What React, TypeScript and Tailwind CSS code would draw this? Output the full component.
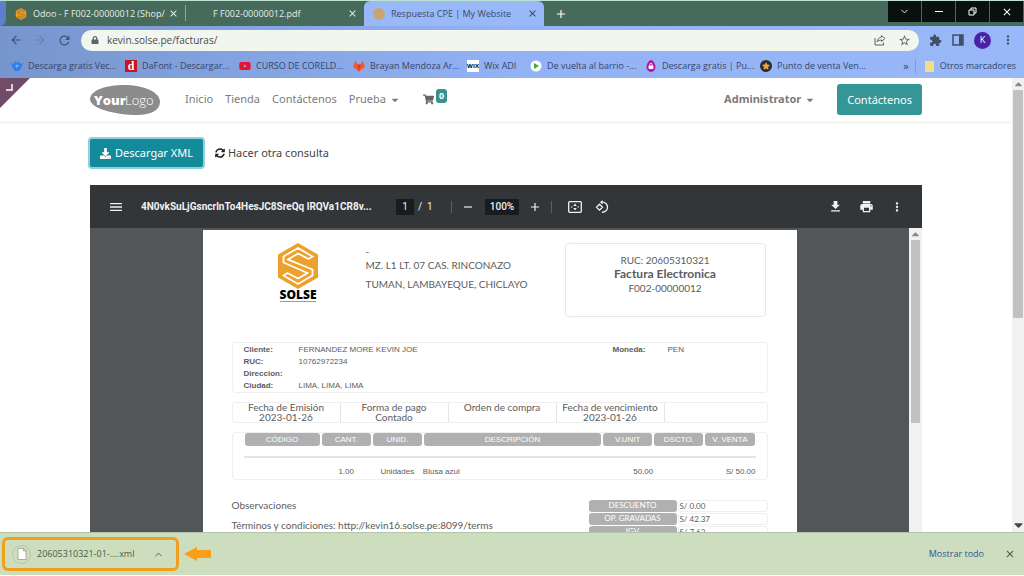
import type { ReactNode } from "react";
import {
  FaCaretDown,
  FaCaretUp,
  FaDownload,
  FaLock,
  FaShoppingCart,
  FaStar,
  FaSyncAlt,
  FaYoutube,
} from "react-icons/fa";
import {
  MdAdd,
  MdArrowBack,
  MdArrowForward,
  MdClose,
  MdExtension,
  MdFileDownload,
  MdMenu,
  MdMoreVert,
  MdPrint,
  MdRefresh,
  MdRemove,
  MdStarBorder,
} from "react-icons/md";
import { LuChevronDown, LuChevronUp } from "react-icons/lu";

interface Bookmark {
  label: string;
  icon: ReactNode;
  width: string;
}

const bookmarks: Bookmark[] = [
  { label: "Descarga gratis Vec...", icon: <VecteezyIcon />, width: "w-[114px]" },
  {
    label: "DaFont - Descargar...",
    icon: (
      <span className="flex h-3 w-3 items-center justify-center bg-[#c8141c] font-['Liberation_Serif',serif] text-[12px] leading-3 font-bold text-white">
        d
      </span>
    ),
    width: "w-[114px]",
  },
  { label: "CURSO DE CORELD...", icon: <FaYoutube className="h-3 w-3 text-[#e8112d]" />, width: "w-[114px]" },
  { label: "Brayan Mendoza Ar...", icon: <GitlabIcon />, width: "w-[114px]" },
  {
    label: "Wix ADI",
    icon: (
      <span className="flex h-3 w-3 items-center justify-center bg-white text-[6px] leading-3 font-bold text-black">
        WIX
      </span>
    ),
    width: "w-[63px]",
  },
  { label: "De vuelta al barrio -...", icon: <PlayIcon />, width: "w-[115px]" },
  { label: "Descarga gratis | Pu...", icon: <DropIcon />, width: "w-[115px]" },
  {
    label: "Punto de venta Ven...",
    icon: (
      <span className="flex h-3 w-3 items-center justify-center rounded-full bg-[#2b2a33]">
        <FaStar className="h-2 w-2 text-[#e9a23b]" />
      </span>
    ),
    width: "w-[114px]",
  },
];

const customer = [
  { label: "Cliente:", value: "FERNANDEZ MORE KEVIN JOE" },
  { label: "RUC:", value: "10762972234" },
  { label: "Direccion:", value: "" },
  { label: "Ciudad:", value: "LIMA, LIMA, LIMA" },
];

const terms = [
  { label: "Fecha de Emisión", value: "2023-01-26" },
  { label: "Forma de pago", value: "Contado" },
  { label: "Orden de compra", value: "" },
  { label: "Fecha de vencimiento", value: "2023-01-26" },
];

const columns = [
  { label: "CÓDIGO", width: "w-[77px]" },
  { label: "CANT.", width: "w-[51px]" },
  { label: "UNID.", width: "w-[51px]" },
  { label: "DESCRIPCIÓN", width: "w-[179px]" },
  { label: "V.UNIT", width: "w-[51px]" },
  { label: "DSCTO.", width: "w-[51px]" },
  { label: "V. VENTA", width: "w-[51px]" },
];

const totals = [
  { label: "DESCUENTO", value: "S/ 0.00" },
  { label: "OP. GRAVADAS", value: "S/ 42.37" },
  { label: "IGV", value: "S/ 7.63" },
];

function VecteezyIcon() {
  return (
    <svg viewBox="0 0 12 12" className="h-3 w-3">
      <path d="M0 3l3 1 1-3 2 2 2-2 1 3 3-1-2 5-2 3H4L2 8z" fill="#2f7df0" />
      <circle cx="6" cy="6" r="1.5" fill="#7fb3fa" />
    </svg>
  );
}

function GitlabIcon() {
  return (
    <svg viewBox="0 0 12 12" className="h-3 w-3">
      <path d="M2.500 0.500L4.200 4.500h3.600L9.500 0.500 12 7 6 11.500 0 7z" fill="#ef5a2a" />
      <path d="M4.200 4.500h3.600L6 11.500z" fill="#e03c24" />
    </svg>
  );
}

function PlayIcon() {
  return (
    <svg viewBox="0 0 12 12" className="h-3 w-3">
      <circle cx="6" cy="6" r="5.5" fill="#fff" />
      <path d="M4 3l5 3-5 3z" fill="#3fae29" />
    </svg>
  );
}

function DropIcon() {
  return (
    <svg viewBox="0 0 12 12" className="h-3 w-3">
      <path d="M6 0c1.500 0 4.500 3.500 4.500 7.200A4.500 4.800 0 0 1 1.500 7.200C1.500 3.500 4.500 0 6 0z" fill="#b5179e" />
      <rect x="3.500" y="5.500" width="5" height="3.500" rx="1" fill="#fff" />
      <path d="M4.800 6V4.500a1.200 1.200 0 0 1 2.400 0V6" fill="none" stroke="#fff" strokeWidth="0.8" />
    </svg>
  );
}

function ShareIcon() {
  return (
    <svg viewBox="0 0 12 12" className="h-3 w-3" fill="none" stroke="#5d6368" strokeWidth="1">
      <path d="M1 4v7h8.500V8.500" />
      <path d="M7.500 1.500L11 4.500 7.500 7.500V6C5.500 6 4.200 6.600 3 8c.3-2.500 1.600-4.500 4.500-5z" />
    </svg>
  );
}

function HexIcon({ className, mark }: { className: string; mark: string }) {
  return (
    <svg viewBox="0 0 40 46" className={className}>
      <path d="M20 0l20 11.500v23L20 46 0 34.500v-23z" fill="#eca12c" />
      <path
        d="M20 5l14.500 8.500-4 2.500L20 10.500 10 16.500l24.500 10v6L20 41 5.500 32.500l4-2.500L20 35.500l9.500-5.500L5.500 19.500v-6z"
        fill="none"
        stroke={mark}
        strokeWidth="1.8"
      />
    </svg>
  );
}

function YourLogo() {
  return (
    <svg viewBox="0 0 70 30" className="h-[30px] w-[70px]" role="img" aria-label="YourLogo">
      <path d="M0 14C1 5 16 0 34 0c20 0 36 7 36 17 0 8-9 13-23 13C27 30 0 24 0 14z" fill="#8c8c8c" />
      <g fill="#fff" fontFamily="'Open Sans', sans-serif">
        <text x="4" y="20" fontWeight="800" fontSize="13">
          Your
        </text>
        <text x="35" y="20" fontWeight="300" fontSize="13">
          Logo
        </text>
      </g>
    </svg>
  );
}

function Tab({ title, icon, active, width }: { title: string; icon?: ReactNode; active?: boolean; width: string }) {
  return (
    <div
      className={`flex h-full items-center pr-1 pl-2 ${width} ${
        active ? "rounded-t-md bg-[#98b8f8] text-[#3a4a66]" : "text-[#e6efea]"
      }`}
    >
      <span className="flex w-[14px] shrink-0 justify-center">{icon}</span>
      <span className="ml-[5px] flex-1 overflow-hidden whitespace-nowrap">{title}</span>
      <button type="button" aria-label="Cerrar pestaña" className="flex w-4 shrink-0 justify-center">
        <MdClose className="h-[11px] w-[11px]" />
      </button>
    </div>
  );
}

function BrowserChrome() {
  return (
    <header className="shrink-0 font-['Open_Sans',sans-serif] text-[9px]">
      <div className="flex h-[26px] items-start border-t border-[#bfe3d2] bg-[#466a5b]">
        <div className="h-full w-[6px] rounded-br-md bg-[#5b7fc8]" />
        <Tab title="Odoo - F F002-00000012 (Shop/" icon={<HexIcon className="h-3 w-3" mark="#8a5c10" />} width="w-[179px]" />
        <div className="my-1 h-4 w-px bg-[#8fa89c]" />
        <Tab title="F F002-00000012.pdf" width="w-[178px]" />
        <Tab
          active
          title="Respuesta CPE | My Website"
          icon={<span className="h-3 w-3 rounded-full bg-[#c9a671]" />}
          width="w-[180px]"
        />
        <button type="button" aria-label="Nueva pestaña" className="ml-[10px] flex h-full items-center text-white">
          <MdAdd className="h-[14px] w-[14px]" />
        </button>
        <div className="mr-px ml-auto flex h-[21px] gap-px text-white">
          <button type="button" aria-label="Buscar pestañas" className="flex w-[33px] items-center justify-center bg-[#09110e]">
            <LuChevronDown className="h-[11px] w-[11px]" />
          </button>
          <button type="button" aria-label="Minimizar" className="flex w-[33px] items-center justify-center bg-[#09110e]">
            <span className="h-px w-2 bg-white" />
          </button>
          <button type="button" aria-label="Restaurar" className="flex w-[33px] items-center justify-center bg-[#09110e]">
            <svg viewBox="0 0 9 9" className="h-[9px] w-[9px]" fill="none" stroke="#fff">
              <path d="M1 3h5v5H1zM3 3V1h5v5H6" />
            </svg>
          </button>
          <button type="button" aria-label="Cerrar" className="flex w-[33px] items-center justify-center bg-[#09110e]">
            <MdClose className="h-3 w-3" />
          </button>
        </div>
      </div>

      <div className="bg-linear-to-r from-[#7795cd] via-[#92b2f5] to-[#98b8f8]">
        <div className="flex h-7 items-center">
          <div className="flex w-[81px] items-center gap-[10px] pl-[9px] text-[#41567a]">
            <button type="button" aria-label="Atrás">
              <MdArrowBack className="h-[14px] w-[14px]" />
            </button>
            <button type="button" aria-label="Adelante" className="text-[#6a83b3]">
              <MdArrowForward className="h-[14px] w-[14px]" />
            </button>
            <button type="button" aria-label="Recargar">
              <MdRefresh className="h-[15px] w-[15px]" />
            </button>
          </div>
          <div className="flex h-[21px] flex-1 items-center rounded-full bg-[#f3f6ee] pr-2 pl-[10px] text-[#5d6368]">
            <FaLock className="h-2 w-2" />
            <input
              aria-label="Dirección"
              defaultValue="kevin.solse.pe/facturas/"
              className="ml-2 min-w-0 flex-1 bg-transparent text-[10px] text-[#454a4f] outline-none"
            />
            <button type="button" aria-label="Compartir">
              <ShareIcon />
            </button>
            <button type="button" aria-label="Añadir a marcadores" className="ml-3">
              <MdStarBorder className="h-[13px] w-[13px]" />
            </button>
          </div>
          <div className="flex w-[105px] items-center gap-[10px] pl-[10px] text-[#3f5069]">
            <button type="button" aria-label="Extensiones">
              <MdExtension className="h-[13px] w-[13px]" />
            </button>
            <button type="button" aria-label="Panel lateral">
              <svg viewBox="0 0 12 12" className="h-3 w-3">
                <path d="M1 1h10v10H1z" fill="none" stroke="currentColor" strokeWidth="1.500" />
                <path d="M7 1h4v10H7z" fill="currentColor" />
              </svg>
            </button>
            <button
              type="button"
              className="flex h-[17px] w-[17px] items-center justify-center rounded-full bg-[#4a22a8] text-[9px] text-white"
            >
              K
            </button>
            <button type="button" aria-label="Más opciones">
              <MdMoreVert className="h-[14px] w-[14px]" />
            </button>
          </div>
        </div>

        <nav className="flex h-6 items-center pl-[11px] text-[#34476b]">
          {bookmarks.map((b) => (
            <a key={b.label} href="#" className={`flex shrink-0 items-center gap-[5px] whitespace-nowrap ${b.width}`}>
              {b.icon}
              {b.label}
            </a>
          ))}
          <button type="button" aria-label="Más marcadores" className="ml-auto text-[11px]">
            »
          </button>
          <a href="#" className="ml-[6px] flex items-center gap-[6px] border-l border-[#7f9cdb] pr-2 pl-[9px] whitespace-nowrap">
            <span className="h-[11px] w-[9px] bg-[#f5dd85]" />
            Otros marcadores
          </a>
        </nav>
      </div>
    </header>
  );
}

function SiteHeader() {
  return (
    <div className="flex items-center border-b-[3px] border-[#f7f7f7] px-[90px] pt-[6px] pb-[6px] text-[11px] text-[#7b7b7b]">
      <YourLogo />
      <nav className="ml-[25px] flex items-center gap-3">
        <a href="#">Inicio</a>
        <a href="#">Tienda</a>
        <a href="#">Contáctenos</a>
        <a href="#" className="flex items-center gap-1">
          Prueba <FaCaretDown className="h-[10px] w-[10px]" />
        </a>
      </nav>
      <a href="#" aria-label="Carrito" className="ml-[23px] flex items-center gap-[2px]">
        <FaShoppingCart className="h-[11px] w-[11px] text-[#666]" />
        <span className="mb-2 rounded-[3px] bg-[#36918f] px-[3px] text-[9px] leading-[14px] font-bold text-white">0</span>
      </a>
      <button type="button" className="ml-auto flex items-center gap-1 font-bold">
        Administrator <FaCaretDown className="h-[10px] w-[10px]" />
      </button>
      <a href="#" className="ml-[22px] rounded-[3px] bg-[#349696] px-[10px] leading-[31px] text-white">
        Contáctenos
      </a>
    </div>
  );
}

function ViewerToolbar() {
  return (
    <div className="flex h-[43px] items-center bg-[#323639] px-[18px] font-['Roboto',sans-serif] text-[10px] text-[#f1f1f1]">
      <button type="button" aria-label="Menú">
        <MdMenu className="h-4 w-4" />
      </button>
      <span className="ml-[17px] w-[238px] font-bold whitespace-nowrap">4N0vkSuLjGsncrlnTo4HesJC8SreQq lRQVa1CR8v...</span>
      <div className="ml-[17px] flex items-center">
        <input aria-label="Página" defaultValue="1" className="h-4 w-[18px] bg-[#191b1c] text-center" />
        <span className="ml-1 w-4 whitespace-nowrap">/&nbsp; 1</span>
        <span className="ml-[17px] h-3 w-px bg-[#5b5f62]" />
        <button type="button" aria-label="Alejar" className="ml-[9px]">
          <MdRemove className="h-[14px] w-[14px]" />
        </button>
        <input aria-label="Zoom" defaultValue="100%" className="ml-[10px] h-4 w-[34px] bg-[#191b1c] text-center font-medium" />
        <button type="button" aria-label="Acercar" className="ml-[9px]">
          <MdAdd className="h-[14px] w-[14px]" />
        </button>
        <span className="ml-[9px] h-3 w-px bg-[#5b5f62]" />
        <button type="button" aria-label="Ajustar a la página" className="ml-4">
          <svg viewBox="0 0 14 12" className="h-3 w-[14px]" fill="none" stroke="currentColor">
            <rect x="0.700" y="0.700" width="12.600" height="10.600" rx="1" strokeWidth="1.300" />
            <path d="M3 6h1.500M9.500 6H11" />
            <path d="M5.300 5L7 2.500l1.700 2.500zM5.300 7L7 9.500l1.700-2.500z" fill="currentColor" stroke="none" />
          </svg>
        </button>
        <button type="button" aria-label="Girar" className="ml-[13px]">
          <svg viewBox="0 0 14 14" className="h-[14px] w-[14px]" fill="none" stroke="currentColor" strokeWidth="1.300">
            <path d="M4.500 4.200l3 3-3 3-3-3zM6 2.200h2a5 5 0 1 1-1 10" />
            <path d="M7.500 0v4.400L5 2.200z" fill="currentColor" stroke="none" />
          </svg>
        </button>
      </div>
      <div className="ml-auto flex items-center gap-4">
        <button type="button" aria-label="Descargar">
          <MdFileDownload className="h-[15px] w-[15px]" />
        </button>
        <button type="button" aria-label="Imprimir">
          <MdPrint className="h-[15px] w-[15px]" />
        </button>
        <button type="button" aria-label="Más acciones">
          <MdMoreVert className="h-[14px] w-[14px]" />
        </button>
      </div>
    </div>
  );
}

function Invoice() {
  return (
    <article className="mx-auto mt-[2px] w-[594px] bg-white px-[29px] pt-[13px] font-['Lato',sans-serif] text-[10px] text-[#5c5c5c]">
      <div className="flex h-[74px] items-start">
        <div className="ml-[46px] flex w-[41px] flex-col items-center text-black">
          <HexIcon className="h-[46px] w-10" mark="#fff" />
          <span className="font-['Open_Sans',sans-serif] text-[12px] leading-3 font-extrabold">SOLSE</span>
          <span className="h-px w-9 bg-[#999]" />
        </div>
        <div className="ml-[47px] pt-1">
          <p className="leading-[9px]">-</p>
          <p className="leading-[19px]">MZ. L1 LT. 07 CAS. RINCONAZO</p>
          <p className="leading-[19px]">TUMAN, LAMBAYEQUE, CHICLAYO</p>
        </div>
        <div className="mr-[2px] ml-auto h-full w-[201px] rounded-[4px] border border-[#e9e9e9] pt-[9px] text-center leading-[14px]">
          <p>RUC: 20605310321</p>
          <p className="text-[12px] leading-[14px] font-bold">Factura Electronica</p>
          <p>F002-00000012</p>
        </div>
      </div>

      <div className="mt-[25px] flex rounded-[4px] border border-[#efefef] pt-px pl-[11px] font-['Liberation_Sans',sans-serif] text-[8px] leading-3">
        <dl className="grid w-[369px] grid-cols-[55px_1fr]">
          {customer.map((c) => (
            <div key={c.label} className="contents">
              <dt className="font-bold">{c.label}</dt>
              <dd>{c.value}</dd>
            </div>
          ))}
        </dl>
        <dl className="flex">
          <dt className="w-[55px] font-bold">Moneda:</dt>
          <dd>PEN</dd>
        </dl>
      </div>

      <dl className="mt-[9px] grid h-[21px] grid-cols-[repeat(4,108px)_1fr] rounded-[3px] border border-[#efefef] text-center leading-[10px]">
        {terms.map((t) => (
          <div key={t.label} className="h-[19px] border-r border-[#e6e6e6]">
            <dt className="h-[9px] leading-[9px]">{t.label}</dt>
            <dd>{t.value}</dd>
          </div>
        ))}
      </dl>

      <div className="mt-[9px] h-[48px] rounded-[4px] border border-[#efefef] px-[11px] font-['Liberation_Sans',sans-serif] text-[8px]">
        <table className="w-full table-fixed border-separate border-spacing-0">
          <thead>
            <tr>
              {columns.map((c) => (
                <th key={c.label} className={`p-0 font-normal whitespace-nowrap text-white ${c.width}`}>
                  <span className="mx-px block rounded-[3px] bg-[#b0b0b0] leading-[13px]">{c.label}</span>
                </th>
              ))}
            </tr>
          </thead>
          <tbody>
            <tr>
              <td colSpan={7} className="h-3 border-b-2 border-[#e4e4e4] p-0" />
            </tr>
            <tr className="h-[20px] align-bottom">
              <td className="p-0" />
              <td className="p-0 text-center">1.00</td>
              <td className="p-0 text-center">Unidades</td>
              <td className="p-0">Blusa azul</td>
              <td className="p-0 text-right">50.00</td>
              <td className="p-0" />
              <td className="p-0 text-right whitespace-nowrap">S/ 50.00</td>
            </tr>
          </tbody>
        </table>
      </div>

      <div className="mt-[18px] flex justify-between">
        <div className="leading-[14px]">
          <p>Observaciones</p>
          <p className="mt-[6px]">Términos y condiciones: http://kevin16.solse.pe:8099/terms</p>
        </div>
        <table className="mt-[2px] w-[179px] border-separate border-spacing-0 text-[8px]">
          <tbody>
            {totals.map((t) => (
              <tr key={t.label}>
                <th scope="row" className="w-[88px] p-0 pb-px font-normal text-white">
                  <span className="block h-3 rounded-[3px] bg-[#b0b0b0] leading-[11px]">{t.label}</span>
                </th>
                <td className="p-0 pb-px pl-px">
                  <span className="block h-3 rounded-[3px] border border-[#efefef] pl-px leading-[11px]">{t.value}</span>
                </td>
              </tr>
            ))}
          </tbody>
        </table>
      </div>
    </article>
  );
}

function DownloadShelf() {
  return (
    <footer className="flex h-[43px] shrink-0 items-center border-t border-[#b4c3a9] bg-[#cddebf] font-['Open_Sans',sans-serif] text-[9px] text-[#4b5a48]">
      <button
        type="button"
        className="ml-[2px] flex h-[34px] w-[177px] items-center rounded-[6px] border-[3px] border-[#f0a01e] pr-3 pl-[7px]"
      >
        <span className="flex h-[19px] w-[19px] items-center justify-center rounded-full border border-[#b4c7b0]">
          <svg viewBox="0 0 10 12" className="h-3 w-[10px]">
            <path d="M1 .5h5.500L9 3v8.500H1z" fill="#fff" stroke="#8b978a" strokeWidth="0.700" />
            <path d="M6.500.5V3H9" fill="none" stroke="#8b978a" strokeWidth="0.700" />
          </svg>
        </span>
        <span className="ml-[6px] whitespace-nowrap">20605310321-01-....xml</span>
        <LuChevronUp className="ml-auto h-[11px] w-[11px]" />
      </button>
      <svg viewBox="0 0 27 14" className="ml-[5px] h-[14px] w-[27px]">
        <path d="M0 7L13 0v3h14v8H13v3z" fill="#fa9f17" />
      </svg>
      <button type="button" className="ml-auto font-medium text-[#2d5596]">
        Mostrar todo
      </button>
      <button type="button" aria-label="Cerrar" className="mr-2 ml-5">
        <MdClose className="h-3 w-3" />
      </button>
    </footer>
  );
}

export default function App() {
  return (
    <div className="flex h-screen flex-col overflow-hidden bg-white pb-px">
      <BrowserChrome />

      <div className="flex min-h-0 flex-1 font-['Noto_Sans',sans-serif]">
        <main className="relative flex min-w-0 flex-1 flex-col">
          {/* Backend shortcut folded over the page corner */}
          <svg viewBox="0 0 30 30" className="absolute top-0 left-0 h-[30px] w-[30px]">
            <path d="M0 0h30L0 30z" fill="#714b67" />
            <path d="M12 6v6H6" fill="none" stroke="#fff" strokeWidth="1.500" />
          </svg>

          <SiteHeader />

          <div className="flex min-h-0 flex-1 flex-col px-[90px] pt-[15px]">
            <div className="flex items-center gap-3 text-[11px] text-[#444]">
              <button
                type="button"
                className="flex h-7 items-center gap-1 rounded-[2px] bg-[#148a9b] px-[10px] text-white ring-2 ring-[#8dd2dc]"
              >
                <FaDownload className="h-[11px] w-[11px]" />
                Descargar XML
              </button>
              <button type="button" className="flex items-center gap-[3px]">
                <FaSyncAlt className="h-[10px] w-[10px] text-[#222]" />
                Hacer otra consulta
              </button>
            </div>

            <section className="mt-[18px] flex min-h-0 flex-1 flex-col">
              <ViewerToolbar />
              <div className="flex min-h-0 flex-1 bg-[#525659]">
                <div className="min-w-0 flex-1 overflow-hidden">
                  <Invoice />
                </div>
                <div className="w-[13px] bg-[#f1f1f1]">
                  <FaCaretUp className="mx-auto h-3 w-[9px] text-[#8a8a8a]" />
                  <div className="mx-[2px] h-[183px] bg-[#c1c1c1]" />
                </div>
              </div>
            </section>
          </div>
        </main>

        <div className="flex w-3 flex-col items-center bg-[#f1f1f1]">
          <FaCaretUp className="h-3 w-[9px] text-[#8a8a8a]" />
          <div className="h-[228px] w-[10px] bg-[#c1c1c1]" />
          <FaCaretDown className="mt-auto h-[14px] w-[9px] text-[#444]" />
        </div>
      </div>

      <DownloadShelf />
    </div>
  );
}
